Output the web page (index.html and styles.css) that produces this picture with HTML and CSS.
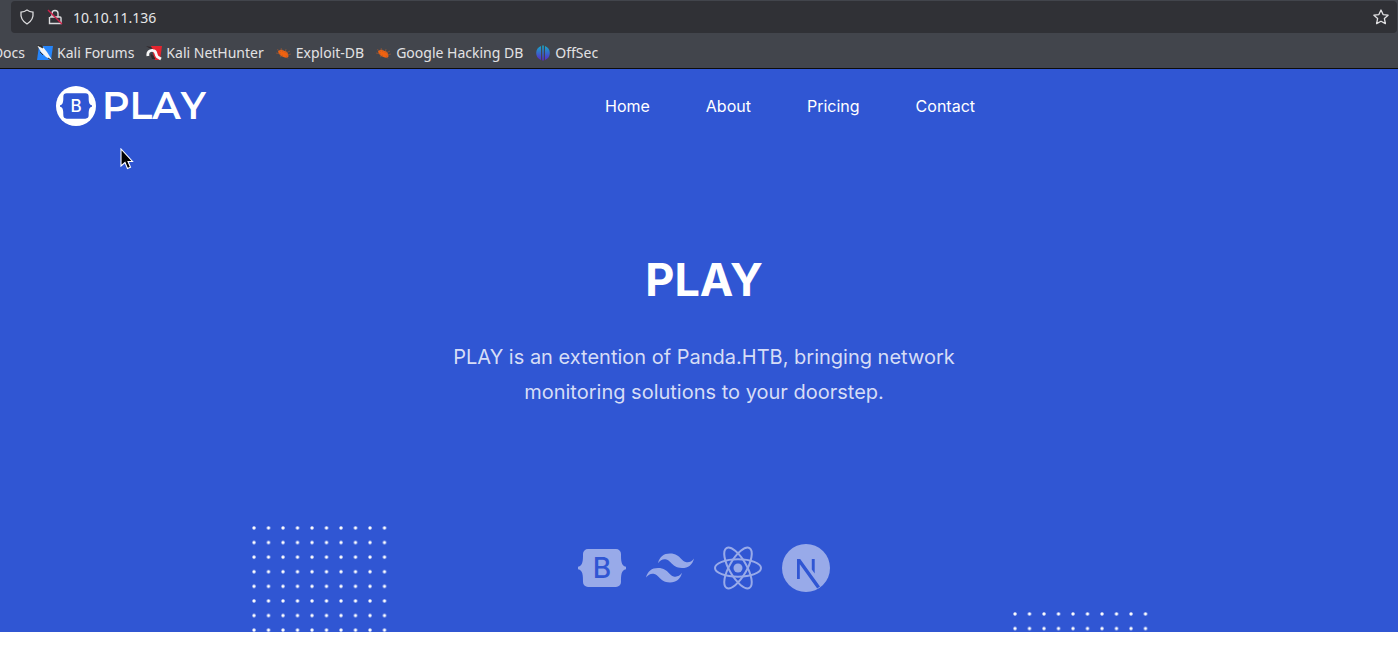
FILE: index.html
```
<!DOCTYPE html>
<html lang="en">
<head>
<meta charset="utf-8">
<title>PLAY</title>
<link rel="stylesheet" href="styles.css">
</head>
<body>
<svg class="defs" aria-hidden="true">
  <symbol id="bootstrap" viewBox="0 0 48 48">
    <path class="shape" d="M10 5h28a5 5 0 0 1 5 5c0 6 0 12 5 12.700v2.600c-5 .7-5 6.700-5 12.700a5 5 0 0 1-5 5H10a5 5 0 0 1-5-5c0-6 0-12-5-12.700v-2.600c5-.7 5-6.700 5-12.700a5 5 0 0 1 5-5z"/>
  </symbol>
  <symbol id="bug" viewBox="0 0 16 16">
    <path d="M2 6.500c2-2.500 4-2 6.500-.5 2.500 0 3.500 2 4 5 0 2-3 2-5 1C5 11.500 3 9.500 2 6.500z" fill="#f2620f"/>
    <path d="M1 4.500l4 2M5 3l2 4M10 4l-1 4M14 6l-4 2M0 8l5 1M15 9l-4 1M4 12l3-2M12 13.500l-2-3" stroke="#a95a30" stroke-width=".6" fill="none"/>
  </symbol>
</svg>
<header class="browser">
  <div class="address">
    <svg class="address-icon" viewBox="0 0 16 16"><path d="M8 1c2 1.500 4 2 6 2.200.6 5-1 9-6 11.800C3 12.200 1.400 8.200 2 3.200 4 3 6 2.500 8 1z" fill="none" stroke="#dcdcde" stroke-width="1.300"/></svg>
    <svg class="address-icon" viewBox="0 0 16 16"><path d="M5 7.500V4.500a3 3 0 0 1 6 0v3M3 8h10a1 1 0 0 1 1 1v5.500H2.500V8" fill="none" stroke="#dcdcde" stroke-width="1.400"/><path d="M1 1l14 14" stroke="#d01f48" stroke-width="1.400"/></svg>
    <input class="url" type="text" aria-label="Address" value="10.10.11.136">
    <button class="star" type="button" aria-label="Bookmark this page"><svg class="address-icon" viewBox="0 0 16 16"><path d="M8 1l2.100 4.600 5 .6-3.700 3.400 1 5L8 12.200l-4.400 2.400 1-5L.9 6.200l5-.6z" fill="none" stroke="#e2e2e4" stroke-width="1.300" stroke-linejoin="round"/></svg></button>
  </div>
  <nav class="bookmarks" aria-label="Bookmarks">
    <a class="bookmark bookmark-cut" href="#">Docs</a>
    <a class="bookmark" href="#"><svg viewBox="0 0 16 16"><path d="M2 1h14l-2 14H0z" fill="#2584fa"/><path d="M0 0l6 2 4 5 5 8-6-3-5-5z" fill="#f4f4f4"/><path d="M0 0l5 1 1 2zM3 7l3 3M11 13l3 2" fill="#222" stroke="#333"/></svg>Kali Forums</a>
    <a class="bookmark" href="#"><svg viewBox="0 0 16 16"><path d="M5 1h11l-2 14H9z" fill="#e5242f"/><path d="M2 11C1 7 4 5 7 5.500c4 .5 2 4 4.500 6.500l3.500 2" fill="none" stroke="#f8f8f8" stroke-width="2.800"/><path d="M0 1l5 1 2 2-4-1zM4.500 10c1-2 3 1 5 4H6z" fill="#30272a"/></svg>Kali NetHunter</a>
    <a class="bookmark" href="#"><svg viewBox="0 0 16 16"><use href="#bug"/></svg>Exploit-DB</a>
    <a class="bookmark" href="#"><svg viewBox="0 0 16 16"><use href="#bug"/></svg>Google Hacking DB</a>
    <a class="bookmark" href="#"><svg viewBox="0 0 16 16"><defs><linearGradient id="os" gradientUnits="userSpaceOnUse" x1="0" y1="0" x2="0" y2="16"><stop stop-color="#13b0c8"/><stop offset="1" stop-color="#5a22cc"/></linearGradient></defs><path d="M6 1v14A7.500 7.500 0 0 1 6 1zM10 1v14A7.500 7.500 0 0 0 10 1zM7.200.5h1.600v15H7.200z" fill="url(#os)"/></svg>OffSec</a>
  </nav>
</header>
<main class="hero">
  <div class="navbar">
    <a class="brand" href="#"><svg class="brand-mark" viewBox="0 0 40 40"><circle cx="20" cy="20" r="20" fill="#fff"/><use class="brand-body" href="#bootstrap" x="4" y="4" width="32" height="32"/><text class="brand-letter" x="20" y="26" text-anchor="middle">B</text></svg>PLAY</a>
    <nav class="menu" aria-label="Main">
      <a href="#">Home</a><a href="#">About</a><a href="#">Pricing</a><a href="#">Contact</a>
    </nav>
  </div>
  <section class="intro">
    <h1>PLAY</h1>
    <p>PLAY is an extention of Panda.HTB, bringing network monitoring solutions to your doorstep.</p>
    <div class="tech">
      <svg viewBox="0 0 48 48"><use href="#bootstrap"/><text class="tech-letter" x="24" y="34" text-anchor="middle">B</text></svg>
      <svg viewBox="0 0 24 24"><path d="M12.001 4.800c-3.200 0-5.200 1.600-6 4.800 1.200-1.600 2.600-2.200 4.200-1.800.913.228 1.565.89 2.288 1.624C13.666 10.618 15.027 12 18.001 12c3.200 0 5.200-1.600 6-4.800-1.200 1.600-2.600 2.200-4.200 1.800-.913-.228-1.565-.89-2.288-1.624C16.337 6.182 14.976 4.800 12.001 4.800zM6.001 12c-3.200 0-5.200 1.600-6 4.800 1.200-1.600 2.600-2.200 4.200-1.800.913.228 1.565.89 2.288 1.624 1.177 1.194 2.538 2.576 5.512 2.576 3.200 0 5.200-1.600 6-4.800-1.200 1.600-2.600 2.200-4.200 1.800-.913-.228-1.565-.89-2.288-1.624C10.337 13.382 8.976 12 6.001 12z"/></svg>
      <svg viewBox="0 0 48 48"><circle cx="24" cy="24" r="4.500"/><g class="orbit"><ellipse cx="24" cy="24" rx="23" ry="8.700"/><ellipse cx="24" cy="24" rx="23" ry="8.700" transform="rotate(60 24 24)"/><ellipse cx="24" cy="24" rx="23" ry="8.700" transform="rotate(120 24 24)"/></g></svg>
      <svg viewBox="0 0 48 48"><circle cx="24" cy="24" r="24"/><path class="cut" d="M15 35V15h3.200L38 42.500l-2.800 2L17.800 20.300V35zM29.800 15h2.900v14.500l-2.900-4z"/></svg>
    </div>
  </section>
  <svg class="dots dots-left" aria-hidden="true"><defs><pattern id="dot" width="14.500" height="14.600" patternUnits="userSpaceOnUse"><circle cx="2" cy="2" r="1.700" fill="#fff"/></pattern></defs><rect width="100%" height="100%" fill="url(#dot)"/></svg>
  <svg class="dots dots-right" aria-hidden="true"><rect width="100%" height="100%" fill="url(#dot)"/></svg>
  <svg class="pointer" viewBox="0 0 14 23" aria-hidden="true"><path d="M1 1v17l4-3.500 2.500 6 3-1.300-2.500-5.700h4.500z" fill="#000" stroke="#fff" stroke-width="1.100"/></svg>
</main>
</body>
</html>
```
FILE: styles.css
```
* { box-sizing: border-box; }
body { margin: 0; background: #fff; font-family: Inter, sans-serif; overflow-x: hidden; }
a { color: inherit; text-decoration: none; }
svg { display: block; flex: none; }
.defs { position: absolute; width: 0; height: 0; }

.browser { background: #42454c; border-bottom: 1px solid #0c0c0d; padding: 1px 1px 0 11px; color: #e2e2e4; font-family: "Noto Sans", sans-serif; }
.address { display: flex; align-items: center; gap: 12px; height: 32px; padding: 0 8px; border-radius: 4px; background: #303136; }
.address-icon { width: 16px; height: 16px; }
.url { flex: 1; min-width: 0; margin-left: -2px; padding: 1px 0 0; border: 0; outline: 0; background: none; color: #e6e6e8; font: 14px/20px "Noto Sans", sans-serif; }
.star { padding: 0; border: 0; background: none; }
.bookmarks { display: flex; gap: 12px; height: 35px; padding-top: 5px; align-items: center; overflow: hidden; margin-left: -11px; }
.bookmark { display: flex; align-items: center; gap: 4px; font-size: 14px; line-height: 20px; white-space: nowrap; }
.bookmark svg { width: 16px; height: 16px; }
.bookmark-cut { width: 25px; justify-content: flex-end; }

.hero { position: relative; overflow: hidden; background: #3056d3; color: #fff; padding: 0 36px 40px 46px; }
.navbar { display: flex; align-items: center; justify-content: space-between; height: 74px; padding: 0 387px 0 10px; }
.brand { display: flex; align-items: center; gap: 6px; font: 600 38px/40px Montserrat, Inter, sans-serif; font-kerning: none; }
.brand-mark { width: 40px; height: 40px; }
.brand-body { fill: #3056d3; }
.brand-letter { font: 500 17px Inter, sans-serif; fill: #fff; }
.menu { display: flex; gap: 56px; font-size: 16px; line-height: 24px; }
.intro { display: flex; flex-direction: column; align-items: center; padding-top: 107px; text-align: center; }
.intro h1 { margin: 0; font-size: 45px; line-height: 60px; font-weight: 700; }
.intro p { max-width: 550px; margin: 30px 0 0; font-size: 20px; line-height: 35px; color: #d6ddf6; }
.tech { display: flex; gap: 20px; margin-top: 134px; fill: #98aae9; }
.tech svg { width: 48px; height: 48px; }
.tech-letter { font: 500 28px Inter, sans-serif; fill: #3056d3; }
.orbit { fill: none; stroke: #98aae9; stroke-width: 2; }
.cut { fill: #3056d3; }
.dots { position: absolute; width: 136px; }
.dots-left { left: 252px; bottom: 0; height: 106px; }
.dots-right { left: 1013px; bottom: 0; height: 20px; }
.pointer { position: absolute; left: 120px; top: 79px; width: 14px; height: 23px; }
```
